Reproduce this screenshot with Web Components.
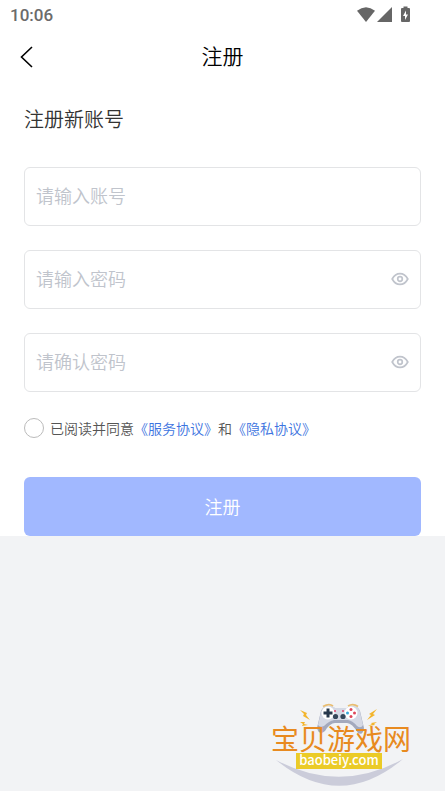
<!DOCTYPE html>
<html lang="zh-CN">
<head>
<meta charset="utf-8">
<meta name="viewport" content="width=device-width, initial-scale=1">
<title>注册</title>
<style>
html, body { margin: 0; min-height: 100%; }
body { background: #f2f3f5; font-family: "Noto Sans CJK SC", sans-serif; font-weight: 350; color: #333; }
</style>
</head>
<body>
<register-page></register-page>
<script>
const define = (name, html, setup) => customElements.define(name, class extends HTMLElement {
  connectedCallback() {
    if (this.shadowRoot) return;
    const t = document.createElement('template');
    t.innerHTML = html;
    this.attachShadow({ mode: 'open' }).append(t.content.cloneNode(true));
    if (setup) setup(this, this.shadowRoot);
  }
});

define('status-bar', `
<style>
:host { display: flex; align-items: center; justify-content: space-between; height: 30px; padding: 0 34px 0 10px; font: 500 17px/30px Roboto, sans-serif; color: #6b6b6b; }
svg { display: block; }
</style>
<span>10:06</span>
<svg width="54" height="18" viewBox="0 0 54 18" fill="#666" aria-hidden="true">
  <path d="M0 4.8Q9-2.200 18 4.800L9 16Z"/>
  <path d="M20 16L35 1V16Z"/>
  <path fill-rule="evenodd" d="M46.500 0.500h4v1.500h1.500q1 0 1 1v12q0 1-1 1h-7q-1 0-1-1v-12q0-1 1-1h1.500zM49 4.500l-3 5.500h2v4l3-5.500h-2z"/>
</svg>`);

define('nav-header', `
<style>
:host { display: grid; grid-template-columns: 48px 1fr 48px; align-items: center; height: 54px; color: #000; }
button { border: 0; background: none; padding: 0 0 0 20px; height: 48px; color: inherit; }
svg { display: block; }
h1 { margin: 0; padding-bottom: 4px; font-size: 21px; line-height: 30px; font-weight: inherit; text-align: center; }
</style>
<button type="button" aria-label="返回"><svg width="14" height="22" viewBox="0 0 14 22" fill="none" stroke="#000" stroke-width="1.600"><path d="M12 1L1.500 11L12 21"/></svg></button>
<h1><slot></slot></h1>`);

define('text-field', `
<style>
:host { display: block; }
div { display: flex; align-items: center; height: 59px; box-sizing: border-box; border: 1px solid #e3e4e6; border-radius: 6px; padding: 0 11px 2px; background: #fff; }
input { flex: 1; min-width: 0; border: 0; outline: 0; padding: 0 0 2px; background: none; font: inherit; font-size: 18px; line-height: 28px; height: 28px; color: #333; }
input::placeholder { color: #c0c4cc; opacity: 1; }
button { border: 0; padding: 0; background: none; }
svg { display: block; }
</style>
<div><input></div>`, (host, root) => {
  const input = root.querySelector('input');
  const label = host.getAttribute('label');
  input.placeholder = label;
  input.setAttribute('aria-label', label);
  if (host.hasAttribute('secret')) {
    input.type = 'password';
    const b = document.createElement('button');
    b.type = 'button';
    b.setAttribute('aria-label', '显示密码');
    b.innerHTML = '<svg width="18" height="14" viewBox="0 0 18 14" fill="none" stroke="#c0c4cc" stroke-width="1.700"><path d="M1.200 7C5-0.200 13-0.200 16.800 7C13 14.200 5 14.200 1.200 7Z"/><circle cx="9" cy="7" r="2.300"/></svg>';
    b.onclick = () => { input.type = input.type === 'password' ? 'text' : 'password'; };
    root.querySelector('div').append(b);
  }
});

define('terms-check', `
<style>
:host { display: flex; align-items: center; gap: 6px; font-size: 14px; line-height: 24px; color: #555; }
input { appearance: none; flex: none; width: 20px; height: 20px; margin: 0; border: 1px solid #bbb; border-radius: 50%; background: #fff; }
input:checked { background: #3c73e0; }
a { color: #3c73e0; text-decoration: none; }
</style>
<input type="checkbox" id="agree">
<span><label for="agree">已阅读并同意</label><a href="#service">《服务协议》</a>和<a href="#privacy">《隐私协议》</a></span>`);

define('primary-button', `
<style>
:host { display: block; }
button { display: block; width: 100%; height: 59px; border: 0; border-radius: 6px; background: #a1b8ff; color: #fff; font: inherit; font-size: 18px; padding: 0 0 2px; }
</style>
<button type="submit"><slot></slot></button>`);

define('site-mark', `
<style>
:host { display: block; width: 160px; }
svg { display: block; width: 100%; }
</style>
<svg viewBox="0 0 160 96" role="img" aria-label="宝贝游戏网 baobeiy.com">
  <path d="M16 65Q80 117 143 64Q80 99 16 65Z" fill="#cbccda"/>
  <path d="M61 16Q64 9 75 13H87Q97 9 100 16L104 33Q103 41 98 38Q92 28 87 28H75Q70 28 65 36Q59 41 57 33Z" fill="#a3a9bd"/>
  <path d="M61 17Q62 12 68 11Q72 10 75 13H87Q90 10 94 11Q99 12 100 17L103 30Q101 34 97 31Q93 26 88 25H74Q69 26 64 31Q60 33 58 30Z" fill="#d5d9e5"/>
  <path d="M63 11.500Q69 8 73 11M88 11Q93 8 98 11.500" stroke="#e8bd72" stroke-width="1.800" fill="none"/>
  <circle cx="68" cy="18" r="6.500" fill="#fff"/><circle cx="91" cy="18" r="6.500" fill="#fff"/>
  <path d="M68 13.500V22.500M63.500 18H72.500" stroke="#27384c" stroke-width="3"/>
  <circle cx="91" cy="14.500" r="1.500" fill="#df475a"/><circle cx="91" cy="21.500" r="1.500" fill="#df475a"/><circle cx="87.500" cy="18" r="1.500" fill="#39a7d9"/><circle cx="94.500" cy="18" r="1.500" fill="#df475a"/>
  <circle cx="75.500" cy="21.500" r="2.600" fill="#35475b"/><circle cx="83" cy="21.500" r="2.600" fill="#35475b"/>
  <path d="M74 16h2M82 16h2" stroke="#df476d" stroke-width="1.500"/>
  <g fill="#f3b52c"><path d="M40 15L47 18L46 20L50 25L43 21L44 19Z"/><path d="M40 27L45 27L44 29L48 30L42 31L43 29Z"/><path d="M117 14L109 19L111 20L107 25L115 20L113 19Z"/><path d="M117 27L111 28L112 29L108 31L115 30L114 29Z"/></g>
  <text x="11" y="55" font-size="28" font-weight="400" fill="#e88a20">宝贝游戏网</text>
  <rect x="36" y="58" width="86" height="16" fill="#ebcb27"/>
  <text x="79" y="70" text-anchor="middle" font-size="13" font-weight="500" fill="#fff">baobeiy.com</text>
</svg>`);

define('register-page', `
<style>
:host { display: flex; flex-direction: column; min-height: 100vh; }
main { background: #fff; }
form { display: flex; flex-direction: column; gap: 24px; padding: 20px 24px 0; }
h2 { margin: 0 0 9px; font-size: 20px; line-height: 30px; font-weight: inherit; }
primary-button { margin-top: 13px; }
footer { margin-top: auto; display: flex; justify-content: flex-end; padding-right: 25px; }
</style>
<main>
  <status-bar></status-bar>
  <nav-header>注册</nav-header>
  <form>
    <h2>注册新账号</h2>
    <text-field label="请输入账号"></text-field>
    <text-field label="请输入密码" secret></text-field>
    <text-field label="请确认密码" secret></text-field>
    <terms-check></terms-check>
    <primary-button>注册</primary-button>
  </form>
</main>
<footer><site-mark></site-mark></footer>`);
</script>
</body>
</html>
